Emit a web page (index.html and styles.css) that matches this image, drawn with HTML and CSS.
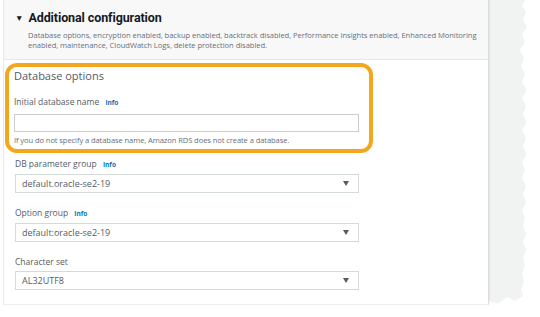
FILE: index.html
```html
<!DOCTYPE html>
<html>
<head>
<meta charset="utf-8">
<link rel="stylesheet" href="styles.css">
</head>
<body>
<div class="page">
  <div class="panel">
    <div class="header">
      <div class="title"><span class="caret">▼</span><span class="title-text">Additional configuration</span></div>
      <div class="desc">Database options, encryption enabled, backup enabled, backtrack disabled, Performance Insights enabled, Enhanced Monitoring enabled, maintenance, CloudWatch Logs, delete protection disabled.</div>
    </div>
    <div class="body">
      <div class="highlight">
        <div class="section-title">Database options</div>
        <div class="label">Initial database name <span class="info">Info</span></div>
        <div class="input"></div>
        <div class="help">If you do not specify a database name, Amazon RDS does not create a database.</div>
      </div>
      <div class="field">
        <div class="label">DB parameter group <span class="info">Info</span></div>
        <div class="select"><span>default.oracle-se2-19</span><span class="arrow"></span></div>
      </div>
      <div class="field">
        <div class="label">Option group <span class="info">Info</span></div>
        <div class="select"><span>default:oracle-se2-19</span><span class="arrow"></span></div>
      </div>
      <div class="field">
        <div class="label">Character set</div>
        <div class="select"><span>AL32UTF8</span><span class="arrow"></span></div>
      </div>
    </div>
  </div>
  <svg class="torn" width="42" height="306" viewBox="0 0 42 306">
    <polygon fill="#f1f2f2" points="0,0 36,0 33,6 37,12 34,20 38,27 33,34 36,42 31,50 35,58 32,66 36,74 33,82 38,90 33,98 37,106 34,114 38,122 33,130 37,138 34,146 38,154 33,162 36,170 33,178 37,186 34,194 37,202 33,210 36,218 34,226 37,234 34,242 37,250 34,258 36,266 33,274 35,282 32,290 34,296 26,301 18,297 10,303 0,302"/>
    <rect x="0" y="0" width="1" height="300" fill="#e2e3e3"/>
  </svg>
</div>
</body>
</html>
```
FILE: styles.css
```css
* { box-sizing: border-box; }
html, body { margin: 0; background: #fff; }
body { font-family: "Open Sans", "Noto Sans", sans-serif; color: #16191f; }
.page { display: flex; align-items: flex-start; width: 540px; height: 317px; overflow: hidden; padding-left: 3px; }
.panel { width: 486px; height: 305px; border-left: 1px solid #e8eaea; border-right: 1px solid #dcdede; border-bottom: 1px solid #eeeeee; }
.header { height: 60px; background: #f8f8f8; border-bottom: 1px solid #e6e8e8; padding: 10px 0 0 11px; }
.title { line-height: 16px; display: flex; align-items: center; }
.title-text { font-family: Roboto, "Noto Sans", sans-serif; font-size: 12.5px; font-weight: 700; letter-spacing: -0.1px; }
.caret { font-size: 8.5px; margin-right: 5px; }
.desc { margin: 4px 0 0 13px; width: 452px; font-size: 7.6px; line-height: 10px; color: #687078; letter-spacing: -0.05px; }
.body { padding: 3px 0 0 1px; }
.highlight { width: 368px; border: 4px solid #f3a71d; border-radius: 12px; padding: 2px 10px 0 5px; height: 90px; }
.section-title { font-size: 11px; line-height: 14px; color: #545b64; }
.label { font-size: 8.5px; line-height: 11px; color: #545b64; margin-top: 13px; }
.info { font-size: 6.5px; font-weight: 700; color: #0073bb; margin-left: 4px; }
.input { height: 18px; border: 1px solid #c9cfd0; margin-top: 6px; }
.help { font-size: 7.6px; line-height: 10px; color: #687078; margin-top: 3px; letter-spacing: -0.1px; }
.field { padding-left: 10px; width: 354px; margin-top: 5px; }
.field + .field { margin-top: 14px; }
.field .label { margin-top: 0; }
.select { height: 19px; border: 1px solid #d5dbdb; margin-top: 4px; display: flex; align-items: center; justify-content: space-between; padding: 0 9px 0 6px; font-size: 9px; color: #545b64; }
.arrow { width: 0; height: 0; border-left: 3.5px solid transparent; border-right: 3.5px solid transparent; border-top: 5px solid #545b64; }
.torn { display: block; }
```
